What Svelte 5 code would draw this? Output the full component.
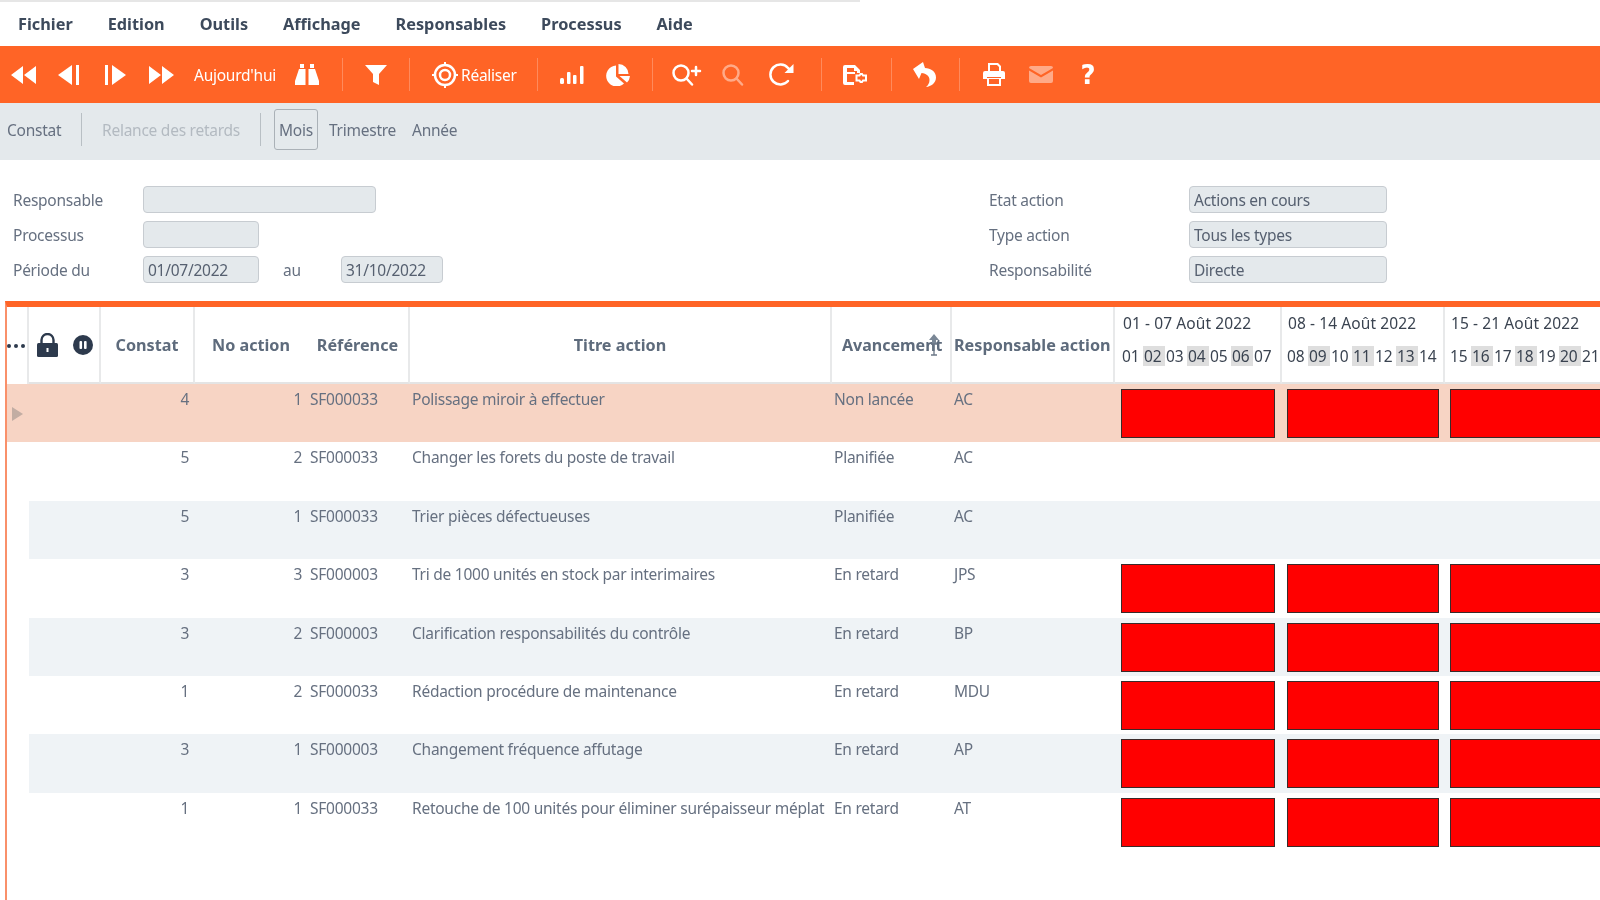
<script>
  const menu = ['Fichier', 'Edition', 'Outils', 'Affichage', 'Responsables', 'Processus', 'Aide'];
  const weeks = [
    { label: '01 - 07 Août 2022', days: ['01', '02', '03', '04', '05', '06', '07'] },
    { label: '08 - 14 Août 2022', days: ['08', '09', '10', '11', '12', '13', '14'] },
    { label: '15 - 21 Août 2022', days: ['15', '16', '17', '18', '19', '20', '21'] }
  ];
  const rows = [
    { c: 4, n: 1, r: 'SF000033', t: 'Polissage miroir à effectuer', a: 'Non lancée', p: 'AC', red: true, sel: true },
    { c: 5, n: 2, r: 'SF000033', t: 'Changer les forets du poste de travail', a: 'Planifiée', p: 'AC', red: false },
    { c: 5, n: 1, r: 'SF000033', t: 'Trier pièces défectueuses', a: 'Planifiée', p: 'AC', red: false },
    { c: 3, n: 3, r: 'SF000003', t: 'Tri de 1000 unités en stock par interimaires', a: 'En retard', p: 'JPS', red: true },
    { c: 3, n: 2, r: 'SF000003', t: 'Clarification responsabilités du contrôle', a: 'En retard', p: 'BP', red: true },
    { c: 1, n: 2, r: 'SF000033', t: 'Rédaction procédure de maintenance', a: 'En retard', p: 'MDU', red: true },
    { c: 3, n: 1, r: 'SF000003', t: 'Changement fréquence affutage', a: 'En retard', p: 'AP', red: true },
    { c: 1, n: 1, r: 'SF000033', t: 'Retouche de 100 unités pour éliminer surépaisseur méplat', a: 'En retard', p: 'AT', red: true }
  ];
</script>

<div class="page">
  <div class="strip"></div>
  <nav class="menu">
    {#each menu as m}<span>{m}</span>{/each}
  </nav>

  <div class="toolbar">
    <span class="tool"><svg width="25" height="18" viewBox="0 0 25 18"><path d="M12 0v18L0 9zM25 0v18L13 9z" /></svg></span>
    <span class="tool"><svg width="22" height="22" viewBox="0 0 22 22"><path d="M14 1v20L0 11z" /><rect x="18" y="1" width="3" height="20" /></svg></span>
    <span class="tool"><svg width="22" height="22" viewBox="0 0 22 22"><rect x="1" y="1" width="3" height="20" /><path d="M8 1v20l14-10z" /></svg></span>
    <span class="tool"><svg width="25" height="18" viewBox="0 0 25 18"><path d="M0 0v18l12-9zM13 0v18l12-9z" /></svg></span>
    <span class="today">Aujourd'hui</span>
    <span class="tool m9"><svg width="24" height="21" viewBox="0 0 24 21"><path d="M5 0h4v4H5zM15 0h4v4h-4zM4 5h6.500v16H0v-4zM13.500 5H20l4 12v4H13.500z" /></svg></span>
    <span class="sep m12"></span>
    <span class="tool"><svg width="22" height="22" viewBox="0 0 22 22"><path d="M0 1h22l-8 9v11l-6-3v-8z" /></svg></span>
    <span class="sep"></span>
    <span class="realiser">
      <svg width="26" height="26" viewBox="0 0 26 26"><circle cx="13" cy="13" r="10" fill="none" stroke="#fff" stroke-width="2.500" /><circle cx="13" cy="13" r="5" fill="none" stroke="#fff" stroke-width="2.500" /><path d="M12 0h2v3h-2zM12 23h2v3h-2zM0 12h3v2H0zM23 12h3v2h-3z" /></svg>
      Réaliser
    </span>
    <span class="sep m20"></span>
    <span class="tool"><svg width="24" height="18" viewBox="0 0 24 18"><rect x="0" y="12" width="4" height="6" rx="1.500" /><rect x="7" y="6" width="3.500" height="12" rx="1" /><rect x="13" y="9" width="3.500" height="9" rx="1" /><rect x="20" y="0" width="3.500" height="18" rx="1" /></svg></span>
    <span class="tool"><svg width="24" height="22" viewBox="0 0 24 22"><path d="M10 1.500v11l8 7A10.500 10.500 0 1 1 10 1.500zM12.500 0a10 10 0 0 1 10 10h-10zM13.500 12H24a10 10 0 0 1-3 6.500z" /></svg></span>
    <span class="sep m11"></span>
    <span class="tool"><svg class="line" width="30" height="22" viewBox="0 0 30 22"><circle cx="9" cy="9" r="7.500" /><path d="M14.500 14.500L20 20.500" /><path d="M24 3v8M20 7h8" /></svg></span>
    <span class="tool dim"><svg class="line" width="22" height="22" viewBox="0 0 22 22"><circle cx="9" cy="9" r="7.500" /><path d="M14.500 14.500L20 20.500" /></svg></span>
    <span class="tool m2"><svg class="line" width="25" height="23" viewBox="0 0 25 23"><path d="M19 18a10 10 0 1 1 0-13l3 3" /><path class="solid" d="M24.500 1v9h-9z" /></svg></span>
    <span class="sep m17"></span>
    <span class="tool"><svg width="24" height="20" viewBox="0 0 24 20"><path d="M2 0h10l5 5v3h-3V6h-3V3H4v4h8v2H4v8h7v3H2a2 2 0 0 1-2-2V2a2 2 0 0 1 2-2z" /><path d="M13.500 10.500h3l1-1.500h1.500l1 1.500h3v5h-3l-1 1.500h-1.500l-1-1.500h-3z" fill="none" stroke="#fff" stroke-width="2" /></svg></span>
    <span class="sep m13"></span>
    <span class="tool"><svg width="24" height="25" viewBox="0 0 24 25"><path d="M10 0L0 7l6 10 2.500-6c5 .5 8 3 8 7 0 3-1.500 5.500-3.500 7 5-.5 10-4 10-9.500 0-6-5.500-9.500-11-9.500z" /></svg></span>
    <span class="sep m11"></span>
    <span class="tool"><svg width="22" height="23" viewBox="0 0 22 23"><path d="M5 0h10l3 3v5h-2V4l-2-2H7v6H5zM2 8h18a2 2 0 0 1 2 2v6h-4v-2H4v2H0v-6a2 2 0 0 1 2-2z" /><path d="M6 16h10v5H6zM4 15v8h14v-8z" fill-rule="evenodd" /></svg></span>
    <span class="tool m1 dim"><svg width="24" height="17" viewBox="0 0 24 17"><path d="M2 0h20a2 2 0 0 1 2 2L12 9 0 2a2 2 0 0 1 2-2z" /><path d="M0 4.500l12 7 12-7V15a2 2 0 0 1-2 2H2a2 2 0 0 1-2-2z" /></svg></span>
    <span class="tool m1 help">?</span>
  </div>

  <div class="tabs">
    <span class="tab first">Constat</span>
    <span class="tsep"></span>
    <span class="tab off">Relance des retards</span>
    <span class="tsep"></span>
    <span class="tab box">Mois</span>
    <span class="tab tri">Trimestre</span>
    <span class="tab">Année</span>
  </div>

  <div class="form">
    <div class="fleft">
      <span class="lbl">Responsable</span><div class="fld w233"></div>
      <span class="lbl">Processus</span><div class="fld w116"></div>
      <span class="lbl">Période du</span>
      <div class="period">
        <div class="fld w116">01/07/2022</div>
        <span class="au">au</span>
        <div class="fld w102">31/10/2022</div>
      </div>
    </div>
    <div class="fright">
      <span class="lbl">Etat action</span><div class="fld w198">Actions en cours</div>
      <span class="lbl">Type action</span><div class="fld w198">Tous les types</div>
      <span class="lbl">Responsabilité</span><div class="fld w198">Directe</div>
    </div>
  </div>

  <div class="table">
    <div class="grid head">
      <div class="hc dots"><i></i><i></i><i></i></div>
      <div class="hc icons">
        <svg width="21" height="24" viewBox="0 0 21 24"><path d="M4.500 11V7a6 6 0 0 1 12 0v4" fill="none" stroke="#2d3a4d" stroke-width="2.400" /><rect y="10" width="21" height="14" rx="1.500" fill="#2d3a4d" /><rect x="9.500" y="15" width="2" height="4" fill="#fff" /></svg>
        <svg width="20" height="20" viewBox="0 0 20 20"><circle cx="10" cy="10" r="10" fill="#2d3a4d" /><rect x="6.500" y="6" width="2.600" height="8" rx="1" fill="#fff" /><rect x="11" y="6" width="2.600" height="8" rx="1" fill="#fff" /></svg>
      </div>
      <div class="hc center">Constat</div>
      <div class="hc center nob">No action</div>
      <div class="hc center">Référence</div>
      <div class="hc center">Titre action</div>
      <div class="hc av">
        Avancement
        <svg class="sort" width="12" height="24" viewBox="0 0 12 24"><path d="M6 1l5 6H8v4H4V7H1z" fill="#7a8796" /><path d="M3 11h6M6 11v11M3 22h6" stroke="#6b7786" stroke-width="1.300" fill="none" /></svg>
      </div>
      <div class="hc rs">Responsable action</div>
      {#each weeks as w}
        <div class="hc week">
          <div class="wl">{w.label}</div>
          <div class="days">
            {#each w.days as d, i}<span class:alt={i % 2 === 1}>{d}</span>{/each}
          </div>
        </div>
      {/each}
    </div>

    {#each rows as row, i}
      <div class="grid row" class:sel={row.sel} class:zebra={i % 2 === 0 && !row.sel}>
        <div class="lead">{#if row.sel}<span class="tri-mark"></span>{/if}</div>
        <div class="cell"></div>
        <div class="cell num first-num">{row.c}</div>
        <div class="cell num">{row.n}</div>
        <div class="cell ref">{row.r}</div>
        <div class="cell ttl">{row.t}</div>
        <div class="cell st">{row.a}</div>
        <div class="cell who">{row.p}</div>
        {#each weeks as w, k}
          <div class="cell gantt g{k}">{#if row.red}<div class="bar"></div>{/if}</div>
        {/each}
      </div>
    {/each}
  </div>
</div>

<style>
  :global(body) { margin: 0; background: #fff; }
  .page {
    width: 1600px; height: 900px; overflow: hidden; display: flex; flex-direction: column;
    font-family: "Noto Sans", "DejaVu Sans", sans-serif; font-size: 15.5px; color: #667080; background: #fff;
    letter-spacing: -0.25px; filter: blur(0.35px);
  }
  .strip { width: 860px; height: 2px; background: #e6e6e6; flex: none; }
  .menu { height: 44px; flex: none; display: flex; align-items: center; gap: 35px; padding-left: 18px; font-weight: 700; color: #3d4a5c; font-size: 16.3px; letter-spacing: 0; }
  .toolbar { height: 57px; flex: none; background: #ff6426; display: flex; align-items: center; color: #fff; }
  .toolbar svg { fill: #fff; display: block; }
  .toolbar svg.line { fill: none; stroke: #fff; stroke-width: 2.5; stroke-linecap: round; }
  .toolbar svg .solid { fill: #fff; stroke: none; }
  .tool { width: 46px; flex: none; display: flex; justify-content: center; align-items: center; }
  .dim { opacity: .45; }
  .today { width: 81px; margin-left: 10px; flex: none; white-space: nowrap; }
  .realiser { display: flex; align-items: center; gap: 3px; margin-left: 12px; width: 95px; white-space: nowrap; flex: none; }
  .sep { width: 1px; height: 33px; background: #ff8a5c; margin: 0 10px; flex: none; }
  .m9 { margin-left: 9px; }
  .m12 { margin-left: 12px; }
  .m20 { margin-left: 10px; margin-right: 11px; }
  .m11 { margin-left: 11px; margin-right: 11px; }
  .m13 { margin-left: 13px; }
  .m17 { margin-left: 17px; }
  .m2 { margin-left: 2px; }
  .m1 { margin-left: 1px; }
  .help { font-weight: 700; font-size: 26px; font-family: "DejaVu Sans", sans-serif; }
  .tabs { height: 57px; flex: none; box-sizing: border-box; padding-bottom: 4px; background: #e4e9ec; display: flex; align-items: center; }
  .tab { white-space: nowrap; flex: none; }
  .first { margin-left: 7px; width: 74px; }
  .tsep { width: 1px; height: 33px; background: #b8bfc4; flex: none; }
  .off { color: #b3bac1; margin-left: 20px; width: 158px; }
  .box { margin-left: 13px; width: 44px; height: 41px; box-sizing: border-box; border: 1px solid #aab1b7; border-radius: 3px; display: flex; align-items: center; justify-content: center; }
  .tri { margin-left: 11px; width: 83px; }
  .form { height: 141px; flex: none; box-sizing: border-box; padding-top: 26px; display: flex; }
  .fleft { display: grid; grid-template-columns: 130px auto; margin-left: 13px; width: 976px; row-gap: 8px; grid-auto-rows: 27px; align-items: center; justify-content: start; }
  .fright { display: grid; grid-template-columns: 200px auto; row-gap: 8px; grid-auto-rows: 27px; align-items: center; justify-content: start; }
  .fld { height: 27px; box-sizing: border-box; background: #e4e9ec; border: 1px solid #c7ccd1; border-radius: 4px; padding-left: 4px; line-height: 27px; color: #566070; white-space: nowrap; }
  .w233 { width: 233px; }
  .w116 { width: 116px; }
  .w102 { width: 102px; }
  .w198 { width: 198px; }
  .period { display: flex; align-items: center; }
  .au { margin-left: 24px; width: 58px; }
  .table { flex: 1; margin-left: 5px; border-left: 2px solid #f9906a; border-top: 6px solid #ff6426; min-height: 0; }
  .grid { display: grid; grid-template-columns: 22px 72px 94px 112px 103px 422px 120px 163px 167px 163px 164px; width: 1622px; }
  .head { height: 77px; color: #5e6b7c; font-weight: 700; font-size: 16.2px; letter-spacing: 0; }
  .hc { border-right: 2px solid #e8e9ea; border-bottom: 2px solid #e4e4e4; box-sizing: border-box; display: flex; align-items: center; white-space: nowrap; overflow: hidden; position: relative; }
  .dots { border-bottom: none; gap: 3px; }
  .dots i { width: 4px; height: 4px; border-radius: 50%; background: #2d3a4d; display: block; }
  .icons { gap: 15px; padding-left: 8px; }
  .center { justify-content: center; }
  .nob { border-right: none; }
  .av { padding-left: 10px; font-size: 16px; }
  .sort { position: absolute; left: 96px; top: 26px; }
  .rs { padding-left: 2px; }
  .week { flex-direction: column; align-items: flex-start; padding-left: 4px; font-weight: 400; font-size: 15.5px; color: #3a4350; }
  .week:nth-child(9) { padding-left: 6px; }
  .wl { height: 39px; line-height: 32px; padding-left: 2px; letter-spacing: 0.1px; }
  .days { display: flex; }
  .days span { width: 22px; height: 20px; line-height: 20px; padding-left: 1px; box-sizing: border-box; letter-spacing: 0; }
  .days .alt { background: #dedede; }
  .row { height: 58.4px; }
  .cell { padding-top: 5px; line-height: 20px; white-space: nowrap; box-sizing: border-box; min-width: 0; }
  .sel .lead, .sel .cell { background: #f7d4c4; }
  .zebra .cell { background: #eff3f6; }
  .lead { position: relative; }
  .tri-mark { position: absolute; left: 5px; top: 23px; width: 0; height: 0; border-left: 11px solid #c2ada3; border-top: 7px solid transparent; border-bottom: 7px solid transparent; }
  .num { text-align: right; padding-right: 5px; }
  .first-num { padding-right: 6px; }
  .ref { padding-left: 3px; }
  .ttl { padding-left: 2px; }
  .st { padding-left: 2px; }
  .who { padding-left: 2px; }
  .gantt { padding-top: 5px; }
  .g0 { padding-left: 6px; padding-right: 7px; }
  .g1 { padding-left: 5px; padding-right: 6px; }
  .g2 { padding-left: 5px; }
  .bar { height: 49px; box-sizing: border-box; background: #ff0000; border: 1px solid #3a2a2a; }
</style>
